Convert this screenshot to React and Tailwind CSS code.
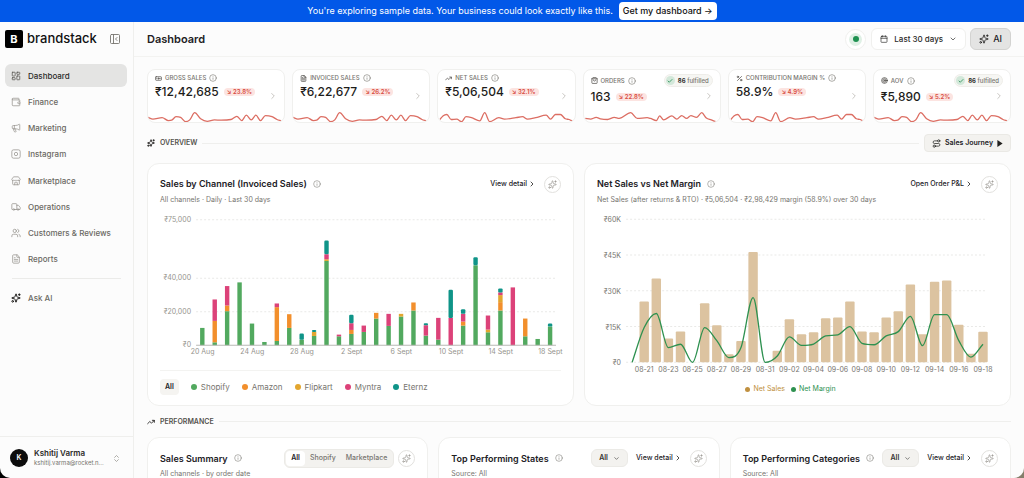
import {
  Banknote,
  Calendar,
  Check,
  ChevronDown,
  ChevronRight,
  ChevronsUpDown,
  FileText,
  Info,
  LayoutDashboard,
  Megaphone,
  PanelLeftClose,
  Percent,
  Route,
  ShoppingBag,
  Sparkles,
  Store,
  Target,
  TrendingUp,
  Truck,
  Users,
  Wallet,
} from 'lucide-react';

const SquareLens = ({ size = 10, strokeWidth = 2, className }) => (
  <svg width={size} height={size} viewBox="0 0 24 24" fill="none" stroke="currentColor" strokeWidth={strokeWidth} className={className}>
    <rect x="2" y="2" width="20" height="20" rx="4" />
    <circle cx="12" cy="12" r="4" />
  </svg>
);

const NAV = [
  { label: 'Dashboard', icon: LayoutDashboard, active: true },
  { label: 'Finance', icon: Wallet },
  { label: 'Marketing', icon: Megaphone },
  { label: 'Instagram', icon: SquareLens },
  { label: 'Marketplace', icon: Store },
  { label: 'Operations', icon: Truck },
  { label: 'Customers & Reviews', icon: Users },
  { label: 'Reports', icon: FileText },
];

const SPARK_A = [[0, 15], [15, 20], [43, 16], [62, 24], [72, 23], [85, 13], [99, 15], [114, 27], [127, 22], [142, 2], [160, 19], [180, 26], [202, 22], [222, 23], [252, 21], [270, 12], [285, 24], [299, 9], [314, 22], [328, 9], [342, 24], [357, 10], [377, 13], [392, 21], [405, 25]];
const SPARK_B = [[6, 21], [15, 11], [27, 7], [40, 21], [57, 20], [72, 27], [85, 13], [102, 16], [127, 25], [142, 2], [157, 27], [185, 16], [202, 20], [237, 16], [257, 13], [272, 20], [297, 16], [329, 9], [342, 20], [357, 7], [372, 7], [387, 19], [399, 21], [409, 26]];
const SPARK_C = [[4, 18], [20, 20], [37, 15], [50, 19], [72, 21], [92, 15], [107, 18], [142, 2], [162, 18], [192, 16], [202, 18], [220, 24], [230, 11], [242, 22], [267, 11], [282, 20], [297, 10], [312, 18], [325, 10], [342, 15], [358, 2], [372, 17], [387, 22], [400, 27]];

const KPIS = [
  { label: 'Gross Sales', icon: Banknote, value: '₹12,42,685', change: '23.8%', spark: SPARK_A },
  { label: 'Invoiced Sales', icon: FileText, value: '₹6,22,677', change: '26.2%', spark: SPARK_A },
  { label: 'Net Sales', icon: TrendingUp, value: '₹5,06,504', change: '32.1%', spark: SPARK_B },
  { label: 'Orders', icon: ShoppingBag, value: '163', change: '22.8%', spark: SPARK_C, fulfilled: 86 },
  { label: 'Contribution Margin %', icon: Percent, value: '58.9%', change: '4.9%', spark: SPARK_B },
  { label: 'AOV', icon: Target, value: '₹5,890', change: '5.2%', spark: SPARK_A, fulfilled: 86 },
];

const CHANNELS = [
  { name: 'Shopify', color: '#52a95f' },
  { name: 'Amazon', color: '#f28f2c' },
  { name: 'Flipkart', color: '#e3a62f' },
  { name: 'Myntra', color: '#dc4279' },
  { name: 'Eternz', color: '#0f9488' },
];

// thousands of rupees per day, in CHANNELS order
const CHANNEL_SALES = [
  [10.4, 0, 0, 0, 0],
  [1.8, 12.8, 0, 12.8, 0],
  [20.4, 3.4, 0, 11.6, 0],
  [37.6, 0, 0, 0, 0],
  [13, 0, 0, 0, 0],
  [2, 0, 0, 0, 0],
  [2.6, 20.2, 0, 2.2, 0],
  [10.4, 8.2, 0, 0, 0],
  [3.4, 0, 0, 0, 3.6],
  [5.6, 0, 2.4, 0, 1.2],
  [50.4, 0, 1, 3, 8.2],
  [5.4, 0, 0, 1, 0],
  [6.8, 2.4, 0, 4, 5],
  [8, 0, 0, 3.8, 0],
  [16, 3.4, 0, 0, 0],
  [11.6, 0, 0, 7.2, 0],
  [17.2, 0, 1.6, 0, 0],
  [20.8, 4.8, 0, 0, 0],
  [5.8, 0, 0, 6.2, 1.2],
  [3.4, 0, 0, 13, 0],
  [0, 0, 0, 16.4, 16.8],
  [11.8, 2.4, 0, 4.6, 2.8],
  [47.8, 0, 0, 0, 4.8],
  [7.8, 0, 1.6, 8.4, 0],
  [20.8, 5, 4.2, 1.6, 2.4],
  [0, 0, 0, 34.6, 0],
  [5.4, 10.6, 0, 0, 0],
  [3.8, 0, 0, 0, 0],
  [11.2, 0, 0, 0, 1.8],
];

const CHANNEL_DAYS = ['20 Aug', '24 Aug', '28 Aug', '2 Sept', '6 Sept', '10 Sept', '14 Sept', '18 Sept'];

const NET_SALES = [0, 25.5, 35.2, 10, 12.9, 0, 24.8, 15.6, 3.4, 9, 46.3, 0, 4.9, 18.1, 11.8, 12.6, 18.5, 18.8, 25.5, 12.9, 12.6, 18.8, 21.4, 32.7, 11.8, 33.8, 34.3, 15.8, 3.6, 12.8];
const NET_MARGIN = [0, 14.6, 20.5, 6.2, 7.6, 0, 14.6, 9.1, 2, 6.2, 27.2, 0, 2.7, 10.7, 7.1, 7.7, 11.1, 11.5, 15, 8, 7.4, 11.1, 12.9, 19.3, 7, 20, 20, 9.1, 2.2, 7.6];
const MARGIN_DAYS = ['08-21', '08-23', '08-25', '08-27', '08-29', '08-31', '09-02', '09-04', '09-06', '09-08', '09-10', '09-12', '09-14', '09-16', '09-18'];

// monotone cubic through the points, so the curve never overshoots
const smoothPath = (pts) => {
  const n = pts.length;
  const slope = [];
  for (let i = 0; i < n - 1; i++) {
    slope.push((pts[i + 1][1] - pts[i][1]) / (pts[i + 1][0] - pts[i][0]));
  }
  const tangent = pts.map((_, i) => {
    if (i === 0) return slope[0];
    if (i === n - 1) return slope[n - 2];
    const a = slope[i - 1];
    const b = slope[i];
    if (a * b <= 0) return 0;
    return Math.sign(a) * Math.min(Math.abs(a + b) / 2, 3 * Math.abs(a), 3 * Math.abs(b));
  });
  let d = `M${pts[0][0]},${pts[0][1]}`;
  for (let i = 0; i < n - 1; i++) {
    const [x0, y0] = pts[i];
    const [x1, y1] = pts[i + 1];
    const h = (x1 - x0) / 3;
    d += `C${x0 + h},${y0 + h * tangent[i]} ${x1 - h},${y1 - h * tangent[i + 1]} ${x1},${y1}`;
  }
  return d;
};

const Sidebar = () => (
  <aside className="flex w-[134px] shrink-0 flex-col border-r border-[#efefed]">
    <div className="flex h-[34px] shrink-0 items-center gap-1 pr-3 pl-[5px]">
      <span className="flex size-[18px] items-center justify-center rounded-xs bg-black text-[11px] font-bold text-white">B</span>
      <span className="flex-1 text-[13px] font-medium text-[#111]">brandstack</span>
      <button aria-label="Collapse sidebar" className="text-[#77756f]">
        <PanelLeftClose size={12} strokeWidth={1.8} />
      </button>
    </div>

    <nav className="mx-[5px] mt-2 flex h-[207px] flex-col justify-between">
      {NAV.map(({ label, icon: Icon, active }) => (
        <a
          key={label}
          href="#"
          className={`mr-px flex h-[23px] items-center gap-[7px] rounded-md px-[6px] text-[8px] font-medium whitespace-nowrap ${active ? 'bg-[#e4e4e3] text-[#2b2a28]' : 'text-[#6b6963]'}`}
        >
          <Icon size={10} strokeWidth={1.8} className={active ? 'text-[#55534e]' : 'text-[#96948e]'} />
          {label}
        </a>
      ))}
    </nav>
    <div className="mx-3 mt-[7px] border-t border-[#ebebe9]" />
    <a href="#" className="mx-[5px] mt-[7px] flex h-[23px] items-center gap-[7px] px-[6px] text-[8px] font-medium text-[#6b6963]">
      <Sparkles size={10} strokeWidth={2.4} className="text-[#22211f]" />
      Ask AI
    </a>

    <button className="mt-auto flex h-[42px] shrink-0 items-center gap-[6px] border-t border-[#efefed] pt-px pr-3 pl-[10px] text-left">
      <span className="flex size-[18px] shrink-0 items-center justify-center rounded-full bg-[#0c0c0c] text-[7px] font-semibold text-white">K</span>
      <span className="flex-1">
        <span className="block text-[8px] leading-[10px] font-semibold text-[#2b2a28]">Kshitij Varma</span>
        <span className="block text-[6px] leading-[10px] text-[#77756f]">kshitij.varma@rocket.n...</span>
      </span>
      <ChevronsUpDown size={9} className="shrink-0 text-[#96948e]" />
    </button>
  </aside>
);

const KpiCard = ({ label, icon: Icon, value, change, spark, fulfilled }) => (
  <div className="relative flex min-h-[54px] flex-col gap-[2px] overflow-hidden rounded-lg border border-[#f0f0ee] bg-white pt-1">
    <div className="flex items-center gap-[3px] px-[7px] text-[6px] leading-[8px] font-medium text-[#77756f] uppercase">
      <Icon size={7} strokeWidth={2.4} className="text-[#4a4843]" />
      <span className="whitespace-nowrap">{label}</span>
      <Info size={8} strokeWidth={1.8} />
      {fulfilled && (
        <span className="ml-auto flex h-[13px] items-center gap-[3px] rounded-full border border-[#eeede9] bg-[#f6f6f3] pr-[3px] pl-px normal-case">
          <span className="flex size-[9px] items-center justify-center rounded-full bg-[#d3e8da]">
            <Check size={6} strokeWidth={3} className="text-[#1e8a4c]" />
          </span>
          <span><b className="font-bold text-[#33322f]">{fulfilled}</b> fulfilled</span>
        </span>
      )}
    </div>
    <div className="flex items-center gap-[5px] px-[7px]">
      <span className="text-[12px] leading-[16px] font-medium text-[#1d1c1a]">{value}</span>
      <span className="rounded-full bg-[#fce4e1] px-[3px] text-[6px] leading-[8px] font-semibold text-[#d84b40]">↘ {change}</span>
    </div>
    <ChevronRight size={10} strokeWidth={1.8} className="absolute top-1/2 right-[6px] -translate-y-1/2 text-[#b5b3ad]" />
    <svg viewBox="0 0 414 28" preserveAspectRatio="none" className="mt-auto h-[10px] w-full overflow-visible">
      <path d={smoothPath(spark)} fill="none" stroke="#dc6e63" strokeWidth="1.3" vectorEffect="non-scaling-stroke" />
    </svg>
  </div>
);

const AiButton = () => (
  <button aria-label="Ask AI about this card" className="flex size-[17px] shrink-0 items-center justify-center rounded-full border border-[#e2e1de] text-[#96948e]">
    <Sparkles size={9} strokeWidth={1.8} />
  </button>
);

const DetailLink = ({ children }) => (
  <a href="#" className="flex items-center gap-px text-[7px] font-medium whitespace-nowrap text-[#22211f]">
    {children}
    <ChevronRight size={8} strokeWidth={2.4} />
  </a>
);

const CardHeader = ({ title, subtitle, children }) => (
  <>
    <div className="flex h-[18px] items-center gap-[6px]">
      <h3 className="text-[9px] font-semibold whitespace-nowrap text-[#22211f]">{title}</h3>
      <Info size={8} strokeWidth={1.8} className="shrink-0 text-[#85837d]" />
      <div className="ml-auto flex items-center gap-2">{children}</div>
    </div>
    <p className="mt-[2px] text-[7px] leading-[10px] whitespace-nowrap text-[#77756f]">{subtitle}</p>
  </>
);

const Card = ({ children }) => (
  <section className="min-w-0 rounded-xl border border-[#f0f0ee] bg-white px-3 pt-[11px] pb-[10px]">{children}</section>
);

const ChannelChart = () => {
  const y = (v) => 133 - v * 1.67;
  return (
    <svg viewBox="0 0 400 150" className="mt-[7px] h-auto w-full overflow-visible text-[7px]">
      {[['₹75,000', 75], ['₹40,000', 40], ['₹20,000', 20], ['₹0', 0]].map(([label, v]) => (
        <g key={label}>
          {v > 0 && <line x1="36" x2="395" y1={y(v)} y2={y(v)} stroke="#e9e9e7" strokeDasharray="2 2" />}
          <text x="31" y={y(v) + 2} textAnchor="end" fill="#96948e">{label}</text>
        </g>
      ))}
      {CHANNEL_SALES.map((day, i) => {
        let total = 0;
        return day.map((v, c) => {
          if (!v) return null;
          total += v;
          return (
            <rect
              key={`${i}-${c}`}
              x={40 + i * 12.39}
              y={y(total)}
              width="4.4"
              height={v * 1.67}
              rx={c === 4 ? 1.2 : 0}
              fill={CHANNELS[c].color}
            />
          );
        });
      })}
      <line x1="36" x2="395" y1="133" y2="133" stroke="#b9b8b5" />
      {CHANNEL_DAYS.map((day, i) => (
        <text key={day} x={42.5 + i * 49.56} y="142" textAnchor="middle" fill="#96948e">{day}</text>
      ))}
    </svg>
  );
};

const MarginChart = () => {
  const y = (v) => 150 - v * 2.378;
  const x = (i) => 35 + i * 12.07;
  return (
    <svg viewBox="0 0 400 164" className="mt-[7px] h-auto w-full overflow-visible text-[7px]">
      {[60, 45, 30, 15, 0].map((v) => (
        <g key={v}>
          <line x1="29" x2="389" y1={y(v)} y2={y(v)} stroke="#e9e9e7" strokeDasharray="2 2" />
          <text x="24" y={y(v) + 3} textAnchor="end" fill="#77756f">{v ? `₹${v}K` : '₹0'}</text>
        </g>
      ))}
      {NET_SALES.map((v, i) => (
        v > 0 && <rect key={i} x={x(i) - 4.7} y={y(v)} width="9.4" height={v * 2.378} rx="1" fill="#dcc3a0" />
      ))}
      <path d={smoothPath(NET_MARGIN.map((v, i) => [x(i), y(v)]))} fill="none" stroke="#2e9150" strokeWidth="1.3" />
      {MARGIN_DAYS.map((day, i) => (
        <text key={day} x={x(i * 2 + 1)} y="160" textAnchor="middle" fill="#77756f">{day}</text>
      ))}
    </svg>
  );
};

const FilterButton = () => (
  <button className="flex h-[18px] items-center gap-[5px] rounded-md border border-[#ebeae6] bg-[#f3f2ef] px-[7px] text-[7px] font-semibold text-[#33322f]">
    All
    <ChevronDown size={7} />
  </button>
);

const App = () => (
  <div className="h-screen overflow-hidden bg-linear-to-r from-black to-[#857f6c] font-['Inter','Liberation_Sans',sans-serif]">
    <div className="flex h-full flex-col overflow-hidden rounded-b-[10px] bg-[#fcfcfc]">
      <div className="flex h-[22px] shrink-0 items-center justify-center gap-[6px] bg-[#0258e8] text-[9px] text-white">
        <p>You're exploring sample data. Your business could look exactly like this.</p>
        <button className="-my-px flex h-[18px] items-center rounded-sm bg-white px-1 text-[9px] font-medium text-[#111]">
          Get my dashboard →
        </button>
      </div>

      <div className="flex min-h-0 flex-1">
        <Sidebar />

        <main className="min-w-0 flex-1 overflow-hidden">
          <header className="flex h-[35px] items-center border-b border-[#f3f3f1] px-[13px]">
            <h1 className="flex-1 text-[11px] font-semibold text-[#22211f]">Dashboard</h1>
            <span className="flex size-[21px] items-center justify-center rounded-full border border-[#f0f0ee] bg-white">
              <span className="flex size-[13px] items-center justify-center rounded-full bg-[#dff0e5]">
                <span className="size-[6px] rounded-full bg-[#1e9150]" />
              </span>
            </span>
            <button className="ml-[5px] flex h-[22px] items-center gap-[6px] rounded-md border border-[#f0f0ee] bg-white px-2 text-[8px] font-medium text-[#2b2a28]">
              <Calendar size={8} />
              Last 30 days
              <ChevronDown size={8} />
            </button>
            <button className="ml-1 flex h-[22px] items-center gap-1 rounded-md border border-[#d3d3d1] bg-[#e4e4e3] px-2 text-[9px] font-medium text-[#22211f]">
              <Sparkles size={10} />
              AI
            </button>
          </header>

          <div className="px-[13px] pt-3">
            <div className="grid grid-cols-6 gap-[7px]">
              {KPIS.map((kpi) => <KpiCard key={kpi.label} {...kpi} />)}
            </div>

            <div className="mt-[11px] flex h-[18px] items-center gap-[5px]">
              <Sparkles size={8} strokeWidth={2.6} className="text-[#22211f]" />
              <h2 className="text-[7px] font-semibold text-[#55534e]">OVERVIEW</h2>
              <div className="flex-1 border-t border-[#efefed]" />
              <button className="flex h-[18px] items-center gap-1 rounded-sm border border-[#eae9e5] bg-[#f3f2ef] px-[7px] text-[7px] font-semibold text-[#22211f]">
                <Route size={9} />
                Sales Journey
                <svg viewBox="0 0 6 8" className="h-[7px] w-[6px]"><path d="M0 0L6 4L0 8Z" fill="currentColor" /></svg>
              </button>
            </div>

            <div className="mt-[11px] grid grid-cols-2 gap-[10px]">
              <Card>
                <CardHeader title="Sales by Channel (Invoiced Sales)" subtitle="All channels · Daily · Last 30 days">
                  <DetailLink>View detail</DetailLink>
                  <AiButton />
                </CardHeader>
                <ChannelChart />
                <div className="mt-2 flex items-center gap-3 border-t border-[#f3f3f1] pt-2 text-[8px] text-[#77756f]">
                  <button className="h-[16px] rounded-sm bg-[#f5f4f1] px-[5px] text-[7px] font-semibold text-[#22211f]">All</button>
                  {CHANNELS.map(({ name, color }) => (
                    <button key={name} className="flex items-center gap-1">
                      <span className="size-[6px] rounded-full" style={{ backgroundColor: color }} />
                      {name}
                    </button>
                  ))}
                </div>
              </Card>

              <Card>
                <CardHeader title="Net Sales vs Net Margin" subtitle="Net Sales (after returns & RTO) · ₹5,06,504 · ₹2,98,429 margin (58.9%) over 30 days">
                  <DetailLink>Open Order P&L</DetailLink>
                  <AiButton />
                </CardHeader>
                <MarginChart />
                <div className="mt-2 flex items-center justify-center gap-[6px] pr-[14px] text-[7px]">
                  <span className="flex items-center gap-[3px] text-[#c09040]">
                    <span className="size-[5px] rounded-full bg-[#c09040]" />
                    Net Sales
                  </span>
                  <span className="flex items-center gap-[3px] text-[#2e9150]">
                    <span className="size-[5px] rounded-full bg-[#2e9150]" />
                    Net Margin
                  </span>
                </div>
              </Card>
            </div>

            <div className="mt-[10px] flex h-[11px] items-center gap-[5px]">
              <TrendingUp size={8} strokeWidth={2.6} className="text-[#22211f]" />
              <h2 className="text-[7px] font-semibold text-[#55534e]">PERFORMANCE</h2>
              <div className="flex-1 border-t border-[#efefed]" />
            </div>

            <div className="mt-[10px] grid grid-cols-3 gap-[10px]">
              <Card>
                <CardHeader title="Sales Summary" subtitle="All channels · by order date">
                  <div className="-mr-1 flex h-[19px] items-center rounded-md border border-[#ebeae6] bg-[#f3f2ef] p-px text-[7px] font-medium text-[#77756f]">
                    <button className="h-full rounded-sm bg-white px-[5px] font-semibold text-[#22211f]">All</button>
                    <button className="px-[5px]">Shopify</button>
                    <button className="px-[5px]">Marketplace</button>
                  </div>
                  <AiButton />
                </CardHeader>
              </Card>
              <Card>
                <CardHeader title="Top Performing States" subtitle="Source: All">
                  <FilterButton />
                  <DetailLink>View detail</DetailLink>
                  <AiButton />
                </CardHeader>
              </Card>
              <Card>
                <CardHeader title="Top Performing Categories" subtitle="Source: All">
                  <FilterButton />
                  <DetailLink>View detail</DetailLink>
                  <AiButton />
                </CardHeader>
              </Card>
            </div>
          </div>
        </main>
      </div>
    </div>
  </div>
);

export default App;
